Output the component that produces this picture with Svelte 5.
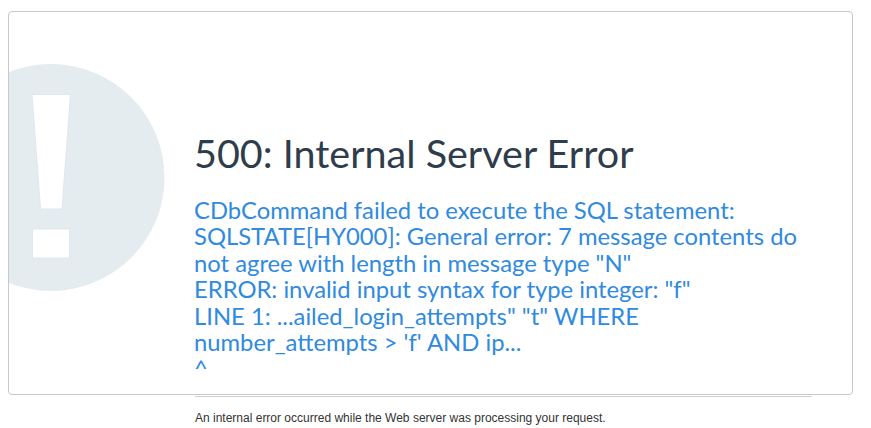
<script lang="ts">
  const title = '500: Internal Server Error';
  const lines = [
    'CDbCommand failed to execute the SQL statement:',
    'SQLSTATE[HY000]: General error: 7 message contents do',
    'not agree with length in message type "N"',
    'ERROR: invalid input syntax for type integer: "f"',
    'LINE 1: ...ailed_login_attempts" "t" WHERE',
    "number_attempts > 'f' AND ip...",
    '^'
  ];
</script>

<div class="page">
  <div class="card">
    <svg class="icon" width="185" height="382" viewBox="9 12 185 382" aria-hidden="true">
      <circle cx="51" cy="177.500" r="113.500" fill="#e4ecf0" />
      <path d="M32 94.500H70.500L62 209H40.500Z" fill="#fff" stroke="#dfe8f0" stroke-width="1" />
      <rect x="32.500" y="229" width="37" height="29" fill="#fff" stroke="#dfe8f0" stroke-width="1" />
    </svg>
    <div class="body">
      <h1>{title}</h1>
      <p class="message">
        {#each lines as line}
          <span>{line}</span>
        {/each}
      </p>
    </div>
  </div>
  <div class="footer">
    <p>An internal error occurred while the Web server was processing your request.</p>
  </div>
</div>

<style>
  :global(body) {
    margin: 0;
    background: #fff;
  }

  .page {
    padding: 11px 18px 0 8px;
    font-family: Lato, "Open Sans", sans-serif;
  }

  .card {
    display: flex;
    height: 382px;
    border: 1px solid #c8c8c8;
    border-radius: 4px;
    overflow: hidden;
  }

  .icon {
    flex: none;
  }

  .body {
    flex: 1;
    min-width: 0;
    padding-top: 115px;
  }

  h1 {
    margin: 0;
    font-size: 39.5px;
    font-weight: 400;
    line-height: 52px;
    color: #2f3c4b;
  }

  .message {
    margin: 18px 0 0;
    font-size: 23.8px;
    line-height: 26.4px;
    color: #2f8ae0;
  }

  .message span {
    display: block;
    white-space: nowrap;
  }

  .footer {
    margin: 1px 41px 0 187px;
    border-top: 1px solid #cfcfcf;
  }

  .footer p {
    margin: 14px 0 0;
    font-family: "Liberation Sans", Arial, sans-serif;
    font-size: 12px;
    line-height: 14px;
    color: #333;
  }
</style>
